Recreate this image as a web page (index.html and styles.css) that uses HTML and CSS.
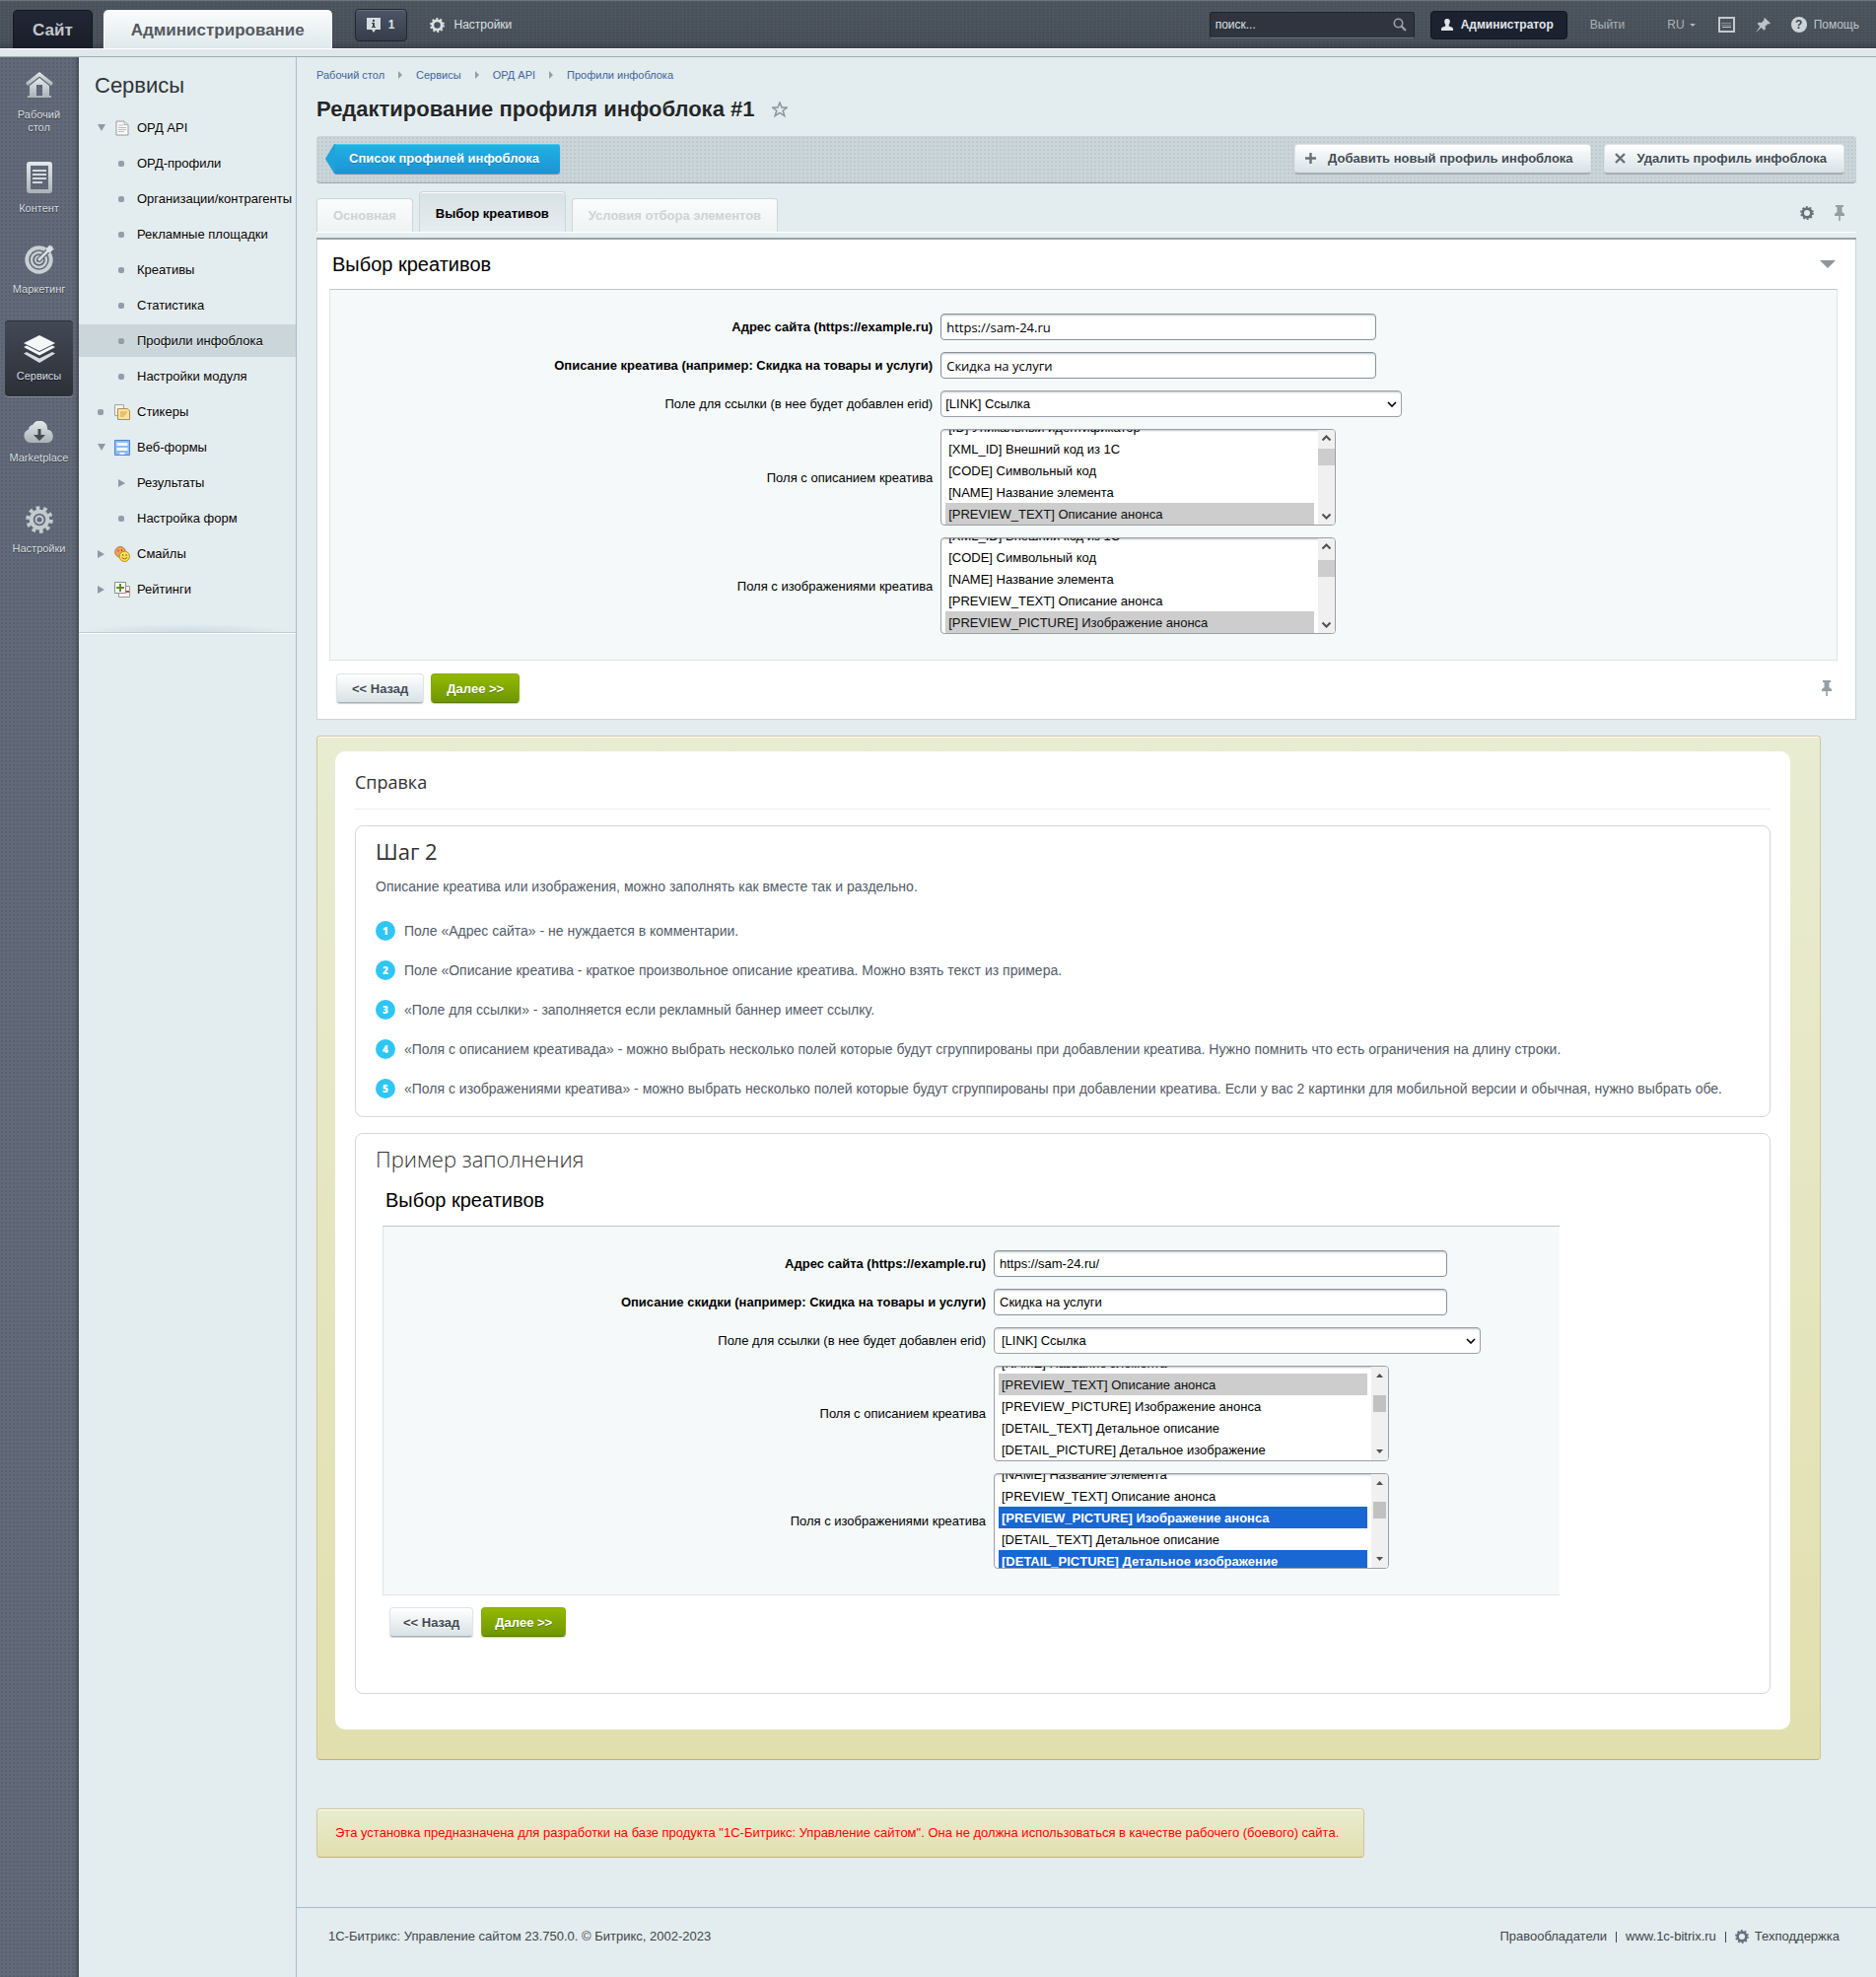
FILE: index.html
```html
<!DOCTYPE html>
<html lang="ru">
<head>
    <meta charset="UTF-8">
    <meta name="viewport" content="width=device-width, initial-scale=1.0">
    <title>Редактирование профиля инфоблока #1</title>
    <link rel="stylesheet" href="styles.css">
</head>

<body>
    <!-- shared icons -->
    <svg class="sprite" aria-hidden="true">
        <defs>
            <linearGradient id="metal" x1="0" y1="0" x2="0" y2="1">
                <stop offset="0" stop-color="#e4eaec"/>
                <stop offset="1" stop-color="#a9b2b6"/>
            </linearGradient>
            <symbol id="i-gear" viewBox="0 0 16 16">
                <circle cx="8" cy="8" r="5" fill="none" stroke="currentColor" stroke-width="3"/>
                <circle cx="8" cy="8" r="6.9" fill="none" stroke="currentColor" stroke-width="2" stroke-dasharray="2.17 2.17"/>
            </symbol>
            <symbol id="i-pin-up" viewBox="0 0 12 16">
                <path d="M2 0h8v2H8.500v5L11 9v2H6.800v5H5.200v-5H1V9l2.500-2V2H2z" fill="currentColor"/>
            </symbol>
        </defs>
    </svg>

    <header class="topbar">
        <nav class="top-tabs">
            <a href="#" class="top-tab">Сайт</a>
            <a href="#" class="top-tab active">Администрирование</a>
        </nav>
        <button type="button" class="notice-btn">
            <svg width="14" height="16" viewBox="0 0 14 16"><path d="M0 1h14v12H9l-2 3-2-3H0z" fill="#d5dcde"/><path d="M6 3h2v2H6zM5 6h3v4h1v1H5v-1h1V7H5z" fill="#3c4352"/></svg>
            <span>1</span>
        </button>
        <a href="#" class="top-link top-settings"><svg width="15" height="15"><use href="#i-gear"/></svg>Настройки</a>
        <form class="search">
            <input type="text" placeholder="поиск..." aria-label="поиск">
            <button type="submit" aria-label="Найти"><svg width="14" height="14" viewBox="0 0 14 14"><circle cx="5.500" cy="5.500" r="4.200" fill="none" stroke="#9da3aa" stroke-width="1.600"/><path d="M8.500 8.500L13 13" stroke="#9da3aa" stroke-width="2.200"/></svg></button>
        </form>
        <a href="#" class="user-btn"><svg width="12" height="12" viewBox="0 0 12 12"><path d="M6 0c2.300 0 3 1.600 2.800 3.200C8.600 4.800 7.600 5.500 7.600 7c0 1 4.400 1.200 4.400 3.200V12H0v-1.800C0 8.200 4.400 8 4.400 7c0-1.500-1-2.200-1.200-3.800C3 1.600 3.700 0 6 0z" fill="#dfe5e8"/></svg>Администратор</a>
        <a href="#" class="top-link muted">Выйти</a>
        <a href="#" class="top-link muted lang">RU<i></i></a>
        <div class="top-tools">
            <a href="#" aria-label="Горячие клавиши"><svg width="17" height="16" viewBox="0 0 17 16"><path d="M1 1h15v14H1z" fill="none" stroke="#c3cacd" stroke-width="2"/><path d="M3.500 6.500h10M3.500 8.500h10" stroke="#c3cacd" stroke-dasharray="1 1"/><path d="M4 10.500h9" stroke="#c3cacd"/></svg></a>
            <a href="#" aria-label="Закрепить"><svg width="15" height="15" viewBox="0 0 15 15"><path d="M9 0l6 5.500-1.500 1-1.200-.3-2.700 2.600.3 2.800-1.400 1.200-2.900-2.700L0 15l4.200-6.200L1.600 6l1.200-1.300 3 .3L8.600 2.300 8.200 1z" fill="#bcc3c7"/></svg></a>
            <a href="#" class="top-link help"><b>?</b>Помощь</a>
        </div>
    </header>
    <div class="topline"></div>

    <div class="layout">
        <nav class="rail">
            <a href="#" class="rail-item">
                <svg width="30" height="28" viewBox="0 0 30 28"><g fill="url(#metal)"><path d="M15 0l14 11-2 3L15 4.500 3 14l-2-3z"/><path d="M5 14l10-8 10 8v10h2v2H3v-2h2zm7-1v11h6V13z" fill-rule="evenodd"/></g></svg>
                <span>Рабочий стол</span>
            </a>
            <a href="#" class="rail-item">
                <svg width="26" height="32" viewBox="0 0 26 32"><path fill-rule="evenodd" d="M3 0h20a3 3 0 0 1 3 3v26a3 3 0 0 1-3 3H3a3 3 0 0 1-3-3V3a3 3 0 0 1 3-3zm1 4v24h18V4z" fill="url(#metal)"/><path d="M6 8h14v2H6zm0 4h14v2H6zm0 4h14v2H6zm0 4h10v2H6z" fill="#d2d9dc"/></svg>
                <span>Контент</span>
            </a>
            <a href="#" class="rail-item marketing">
                <svg width="30" height="30" viewBox="0 0 30 30"><g fill="none" stroke="#c8d0d3"><circle cx="14.500" cy="15.500" r="12.200" stroke-width="4"/><circle cx="14.500" cy="15.500" r="7.500" stroke-width="2.500"/><circle cx="14.500" cy="15.500" r="3.500" stroke-width="2"/></g><path d="M14 16L27 3" stroke="#5f6674" stroke-width="5"/><path d="M14 16L28 2" stroke="#d9e0e2" stroke-width="2.600"/><path d="M22 8V4l4-4v4h4l-4 4z" fill="#dce3e5"/></svg>
                <span>Маркетинг</span>
            </a>
            <a href="#" class="rail-item active">
                <svg width="32" height="28" viewBox="0 0 32 28"><g fill="#f4f7f8"><path d="M16 0l16 8-16 8L0 8z"/><path d="M0 12l3-1.500 13 6.500 13-6.500 3 1.500-16 8.500z"/><path d="M0 18.500L3 17l13 6.500L29 17l3 1.500L16 28z" fill="#d4dbde"/></g></svg>
                <span>Сервисы</span>
            </a>
            <a href="#" class="rail-item market">
                <svg width="32" height="22" viewBox="0 0 32 22"><path d="M7 22a7 7 0 0 1-2-13.500A5 5 0 0 1 9 4 8 8 0 0 1 24 6.500v2A7 7 0 0 1 25 22z" fill="url(#metal)"/><path d="M14.500 8h3v6H22l-6 6-6-6h4.500z" fill="#454c59"/></svg>
                <span>Marketplace</span>
            </a>
            <a href="#" class="rail-item settings">
                <svg width="28" height="28" viewBox="0 0 28 28"><g fill="none" stroke="#c3cbce"><circle cx="14" cy="14" r="8.300" stroke-width="4.200"/><circle cx="14" cy="14" r="11.800" stroke-width="4" stroke-dasharray="3.707 3.707"/><circle cx="14" cy="14" r="3.500" stroke-width="2"/></g></svg>
                <span>Настройки</span>
            </a>
        </nav>

        <aside class="sidebar">
            <h2>Сервисы</h2>
            <ul class="menu">
                <li><a href="#"><i class="mark down"></i><svg class="ico" width="16" height="16" viewBox="0 0 16 16"><path d="M2 1h8l4 3.500V15H2z" fill="#fafafa" stroke="#9a9a9a"/><path d="M4 5h5M4 7.500h8M4 9.500h8M4 11.500h6" stroke="#bbb"/><path d="M10 1v3.500h4" fill="#ddd" stroke="#b5b5b5"/></svg>ОРД API</a></li>
                <li class="sub"><a href="#"><i class="mark dot"></i>ОРД-профили</a></li>
                <li class="sub"><a href="#"><i class="mark dot"></i>Организации/контрагенты</a></li>
                <li class="sub"><a href="#"><i class="mark dot"></i>Рекламные площадки</a></li>
                <li class="sub"><a href="#"><i class="mark dot"></i>Креативы</a></li>
                <li class="sub"><a href="#"><i class="mark dot"></i>Статистика</a></li>
                <li class="sub active"><a href="#"><i class="mark dot"></i>Профили инфоблока</a></li>
                <li class="sub"><a href="#"><i class="mark dot"></i>Настройки модуля</a></li>
                <li><a href="#"><i class="mark dot"></i><svg class="ico" width="16" height="16" viewBox="0 0 16 16"><path d="M.5.500h9v11h-9z" fill="#f1f1ee" stroke="#a5a5a0"/><path d="M3.500 4.500H13l2.500 2v9h-12z" fill="#fbe29a" stroke="#b78d4e"/><path d="M6 8h7M6 10h6M6 12h4" stroke="#cf9d50"/></svg>Стикеры</a></li>
                <li><a href="#"><i class="mark down"></i><svg class="ico" width="16" height="16" viewBox="0 0 16 16"><path d="M.5.500h15v15H.5z" fill="#8dbdf0" stroke="#4f86c6"/><path d="M2.500 3h11v3h-11zm0 5h11v3h-11zm3 5h5v2h-5z" fill="#eef6ff"/></svg>Веб-формы</a></li>
                <li class="sub"><a href="#"><i class="mark right"></i>Результаты</a></li>
                <li class="sub"><a href="#"><i class="mark dot"></i>Настройка форм</a></li>
                <li><a href="#"><i class="mark right"></i><svg class="ico" width="16" height="16" viewBox="0 0 16 16"><circle cx="6" cy="5.800" r="5.300" fill="#f0a45c" stroke="#b8722f"/><path d="M4 3.500v2M7.500 3v2" stroke="#8b5020"/><circle cx="10.300" cy="10.300" r="5.200" fill="#fbdf58" stroke="#b98a22"/><path d="M8.700 8v2M12 8v2M7.500 11.500q2.800 3 5.600 0" stroke="#8a6415" fill="none"/></svg>Смайлы</a></li>
                <li><a href="#"><i class="mark right"></i><svg class="ico" width="16" height="16" viewBox="0 0 16 16"><path d="M4.500 4.500h11v11h-11z" fill="#fafafa" stroke="#9b9b9b"/><path d="M12 9h3v2h-3z" fill="#d8402a"/><path d="M.5.500h11v11H.5z" fill="#fff" stroke="#8c8c8c"/><path d="M6 2v8M2 6h8" stroke="#5d8f2a" stroke-width="2"/></svg>Рейтинги</a></li>
            </ul>
        </aside>

        <div class="page">
            <main class="content">
                <nav class="crumbs">
                    <a href="#">Рабочий стол</a><i></i><a href="#">Сервисы</a><i></i><a href="#">ОРД API</a><i></i><a href="#">Профили инфоблока</a>
                </nav>
                <h1>Редактирование профиля инфоблока #1
                    <svg width="16" height="16" viewBox="0 0 16 16"><path d="M8 1l2 5h5.300l-4.100 3.200 1.600 5.300L8 11.300l-4.800 3.200 1.600-5.300L.7 6H6z" fill="none" stroke="#8b959c" stroke-width="1.500"/></svg>
                </h1>

                <div class="toolbar">
                    <a href="#" class="back-btn"><svg width="10" height="30" viewBox="0 0 10 30"><path d="M10 0H9L0 15l9 15h1z" fill="#1ea3dc"/></svg><span>Список профилей инфоблока</span></a>
                    <div class="toolbar-right">
                        <a href="#" class="btn tool-btn"><svg width="11" height="11" viewBox="0 0 11 11"><path d="M5.500 0v11M0 5.500h11" stroke="#66717a" stroke-width="2.400"/></svg>Добавить новый профиль инфоблока</a>
                        <a href="#" class="btn tool-btn"><svg width="11" height="11" viewBox="0 0 11 11"><path d="M1 1l9 9M10 1l-9 9" stroke="#66717a" stroke-width="2.400"/></svg>Удалить профиль инфоблока</a>
                    </div>
                </div>

                <div class="tabs">
                    <a href="#" class="tab disabled">Основная</a>
                    <a href="#" class="tab active">Выбор креативов</a>
                    <a href="#" class="tab disabled">Условия отбора элементов</a>
                    <div class="tab-tools">
                        <svg width="14" height="14" color="#666f74"><use href="#i-gear"/></svg>
                        <svg width="12" height="16" color="#959ea3"><use href="#i-pin-up"/></svg>
                    </div>
                </div>

                <form class="panel">
                    <div class="panel-head">
                        <h3>Выбор креативов</h3>
                        <i class="collapse"></i>
                    </div>
                    <div class="fields">
                        <label for="site" class="req">Адрес сайта (https://example.ru)</label>
                        <div><input type="text" id="site" class="text" value="https://sam-24.ru"></div>
                        <label for="descr" class="req">Описание креатива (например: Скидка на товары и услуги)</label>
                        <div><input type="text" id="descr" class="text" value="Скидка на услуги"></div>
                        <label for="link">Поле для ссылки (в нее будет добавлен erid)</label>
                        <div><select id="link" class="drop"><option>[LINK] Ссылка</option></select></div>
                        <label for="text-fields">Поля с описанием креатива</label>
                        <div><span class="list-wrap"><select multiple id="text-fields" class="list" data-selected="PREVIEW_TEXT" data-scroll="14"></select></span></div>
                        <label for="pic-fields">Поля с изображениями креатива</label>
                        <div><span class="list-wrap"><select multiple id="pic-fields" class="list" data-selected="PREVIEW_PICTURE" data-scroll="36"></select></span></div>
                    </div>
                    <div class="panel-foot">
                        <button type="button" class="btn">&lt;&lt; Назад</button>
                        <button type="button" class="btn green">Далее &gt;&gt;</button>
                        <svg width="12" height="16" color="#959ea3"><use href="#i-pin-up"/></svg>
                    </div>
                </form>

                <section class="note help-note">
                    <div class="help-body">
                        <h4>Справка</h4>
                        <div class="help-box">
                            <h5>Шаг 2</h5>
                            <p>Описание креатива или изображения, можно заполнять как вместе так и раздельно.</p>
                            <ol class="steps">
                                <li>Поле «Адрес сайта» - не нуждается в комментарии.</li>
                                <li>Поле «Описание креатива - краткое произвольное описание креатива. Можно взять текст из примера.</li>
                                <li>«Поле для ссылки» - заполняется если рекламный баннер имеет ссылку.</li>
                                <li>«Поля с описанием креативада» - можно выбрать несколько полей которые будут сгруппированы при добавлении креатива. Нужно помнить что есть ограничения на длину строки.</li>
                                <li>«Поля с изображениями креатива» - можно выбрать несколько полей которые будут сгруппированы при добавлении креатива. Если у вас 2 картинки для мобильной версии и обычная, нужно выбрать обе.</li>
                            </ol>
                        </div>
                        <div class="help-box sample-box">
                            <h5 class="light">Пример заполнения</h5>
                            <form class="sample">
                                <h3>Выбор креативов</h3>
                                <div class="fields">
                                    <label for="s-site" class="req">Адрес сайта (https://example.ru)</label>
                                    <div><input type="text" id="s-site" class="text" value="https://sam-24.ru/"></div>
                                    <label for="s-descr" class="req">Описание скидки (например: Скидка на товары и услуги)</label>
                                    <div><input type="text" id="s-descr" class="text" value="Скидка на услуги"></div>
                                    <label for="s-link">Поле для ссылки (в нее будет добавлен erid)</label>
                                    <div><select id="s-link" class="drop"><option>[LINK] Ссылка</option></select></div>
                                    <label for="s-text">Поля с описанием креатива</label>
                                    <div><span class="list-wrap"><select multiple id="s-text" class="list" data-selected="PREVIEW_TEXT" data-scroll="81"></select></span></div>
                                    <label for="s-pic">Поля с изображениями креатива</label>
                                    <div><span class="list-wrap"><select multiple id="s-pic" class="list focused" data-selected="PREVIEW_PICTURE DETAIL_PICTURE" data-scroll="77"></select></span></div>
                                </div>
                                <div class="sample-foot">
                                    <button type="button" class="btn">&lt;&lt; Назад</button>
                                    <button type="button" class="btn green">Далее &gt;&gt;</button>
                                </div>
                            </form>
                        </div>
                    </div>
                </section>

                <div class="note warning">Эта установка предназначена для разработки на базе продукта "1С-Битрикс: Управление сайтом". Она не должна использоваться в качестве рабочего (боевого) сайта.</div>
            </main>

            <footer class="footer">
                <span>1С-Битрикс: Управление сайтом 23.750.0. © Битрикс, 2002-2023</span>
                <div class="footer-links">
                    <a href="#">Правообладатели</a><s></s><a href="#">www.1c-bitrix.ru</a><s></s><a href="#"><svg width="14" height="14" color="#66707a"><use href="#i-gear"/></svg>Техподдержка</a>
                </div>
            </footer>
        </div>
    </div>

    <script src="script.js"></script>
</body>

</html>
```
FILE: styles.css
```css
* {
    box-sizing: border-box;
}

body {
    margin: 0;
    min-height: 100vh;
    display: flex;
    flex-direction: column;
    background: #e3ecee;
    color: #000;
    font-family: "Liberation Sans", Arial, sans-serif;
    font-size: 13px;
}

a {
    color: inherit;
    text-decoration: none;
}

svg {
    display: block;
    flex: none;
}

.sprite {
    position: absolute;
    width: 0;
    height: 0;
}

/* top bar */
.topbar {
    display: flex;
    align-items: center;
    height: 49px;
    padding: 0 17px 0 13px;
    background:
        repeating-linear-gradient(90deg, rgba(255,255,255,.03) 0 1px, transparent 1px 4px),
        repeating-linear-gradient(0deg, rgba(0,0,0,.06) 0 1px, transparent 1px 3px),
        linear-gradient(#4d555f, #48505a 85%, #3b424b);
    border-top: 1px solid #6a737c;
    font-size: 12px;
    color: #d5dadd;
}

.top-tabs {
    display: flex;
    align-self: flex-end;
    gap: 11px;
}

.top-tab {
    height: 39px;
    line-height: 40px;
    padding: 0 19px;
    border: 1px solid #14171e;
    border-bottom: 0;
    border-radius: 5px 5px 0 0;
    background: linear-gradient(#222736, #191d28);
    font-size: 17px;
    font-weight: bold;
    color: #c3c6c9;
}

.top-tab.active {
    padding: 0 27px;
    border-color: #fff;
    background: linear-gradient(#fafcfc, #dfe9ec);
    color: #55595e;
}

.notice-btn {
    display: flex;
    align-items: center;
    gap: 8px;
    height: 33px;
    margin-left: 23px;
    padding: 0 12px 0 11px;
    border: 1px solid #22262e;
    border-radius: 4px;
    background: linear-gradient(#4d5566, #363c4a);
    font: bold 12px "Liberation Sans", Arial, sans-serif;
    color: #dfe3e6;
    box-shadow: inset 0 1px #656d7e;
}

.top-link {
    display: flex;
    align-items: center;
    gap: 9px;
}

.top-settings {
    margin-left: 23px;
    color: #dbe0e3;
}

.search {
    display: flex;
    align-items: center;
    width: 208px;
    height: 27px;
    margin-left: auto;
    padding: 0 7px 0 5px;
    border: 1px solid #1f242c;
    border-bottom-color: #6c747d;
    border-radius: 3px;
    background: #2f343e;
}

.search input {
    flex: 1;
    min-width: 0;
    padding: 0;
    border: 0;
    background: none;
    outline: none;
    font: 12px "Liberation Sans", Arial, sans-serif;
    color: #fff;
}

.search input::placeholder {
    color: #dfe2e5;
}

.search button {
    padding: 0;
    border: 0;
    background: none;
}

.user-btn {
    display: flex;
    align-items: center;
    gap: 8px;
    height: 29px;
    margin-left: 16px;
    padding: 0 13px 0 10px;
    border: 1px solid #12151c;
    border-radius: 4px;
    background: #1c2130;
    font-weight: bold;
    color: #e2e6ea;
}

.top-link.muted {
    margin-left: 23px;
    color: #adb3b8;
}

.top-link.lang {
    gap: 5px;
    margin-left: 43px;
}

.lang i {
    border: 3px solid transparent;
    border-top-color: #adb3b8;
    border-bottom: 0;
}

.top-tools {
    display: flex;
    align-items: center;
    gap: 21px;
    margin-left: 23px;
}

.help {
    gap: 7px;
    color: #c0c6ca;
}

.help b {
    width: 16px;
    height: 16px;
    border-radius: 50%;
    background: #cdd4d7;
    line-height: 16px;
    text-align: center;
    color: #3f4650;
}

.topline {
    height: 9px;
    background: #dfe9ec;
    border-top: 1px solid #fff;
    border-bottom: 1px solid #a2abb0;
}

/* layout */
.layout {
    display: flex;
    flex: 1;
}

.rail {
    flex: none;
    width: 80px;
    padding: 4px 6px 0 5px;
    background: radial-gradient(circle, #596070 1px, transparent 1px) 0 0 / 4px 4px, #626978;
    box-shadow: inset -5px 0 5px -4px rgba(0,0,0,.4);
}

.rail-item {
    display: flex;
    flex-direction: column;
    align-items: center;
    min-height: 77px;
    padding-top: 11px;
    font-size: 11px;
    line-height: 13px;
    text-align: center;
    color: #d9dee1;
    text-shadow: 0 1px 1px rgba(0,0,0,.5);
}

.rail-item span {
    margin-top: 9px;
}

.rail-item + .rail-item {
    margin-top: 14px;
}

.rail-item + .marketing {
    margin-top: 7px;
}

.rail-item.active {
    margin-top: 11px;
    padding-top: 15px;
    border-radius: 4px;
    background: linear-gradient(#434955, #2b3038);
    box-shadow: inset 0 1px #2c313a, 0 1px #8a919b;
}

.rail-item.active span {
    margin-top: 7px;
}

.rail-item + .settings {
    margin-top: 9px;
}

.sidebar {
    flex: none;
    width: 221px;
    border-right: 1px solid #a5bccf;
}

.sidebar h2 {
    margin: 0;
    padding: 15px 0 0 16px;
    font-size: 22px;
    font-weight: normal;
    line-height: 28px;
    color: #2f3438;
}

.menu {
    margin: 0;
    padding: 10px 0 26px;
    list-style: none;
    border-bottom: 1px solid #bccdd6;
    background: radial-gradient(ellipse at bottom, #cbdbe4, transparent 70%) bottom / 100% 8px no-repeat;
    box-shadow: 0 1px #fff;
}

.menu li {
    height: 36px;
    padding: 2px 0 1px;
}

.menu a {
    display: flex;
    align-items: center;
    height: 33px;
    padding-left: 17px;
    text-shadow: 0 1px #fff;
    white-space: nowrap;
}

.menu .sub a {
    padding-left: 38px;
}

.menu .active a {
    background: #cbd6db;
}

.mark {
    flex: none;
    width: 12px;
    margin-right: 9px;
}

.mark::before {
    content: "";
    display: block;
    width: 6px;
    height: 6px;
    margin-left: 2px;
    border-radius: 2px;
    background: #949dac;
}

.mark.down::before,
.mark.right::before {
    width: 0;
    height: 0;
    border: 4px solid transparent;
    border-top: 7px solid #8d98a8;
    border-bottom: 0;
    border-radius: 0;
    background: none;
}

.mark.right::before {
    border: 4px solid transparent;
    border-left: 7px solid #8d98a8;
    border-right: 0;
}

.ico {
    margin: 0 7px 0 -2px;
}

.page {
    display: flex;
    flex-direction: column;
    flex: 1;
    min-width: 0;
}

.content {
    flex: 1;
    padding: 11px 20px 0;
}

/* heading */
.crumbs {
    display: flex;
    align-items: center;
    line-height: 14px;
    font-size: 11px;
    color: #40669b;
}

.crumbs i {
    margin: 0 14px;
    border: 4px solid transparent;
    border-left-color: #959da2;
    border-right: 0;
}

h1 {
    display: flex;
    align-items: center;
    gap: 18px;
    margin: 14px 0;
    font-size: 22px;
    line-height: 27px;
    color: #23272b;
    text-shadow: 0 1px #fff;
}

.toolbar {
    display: flex;
    align-items: center;
    justify-content: space-between;
    height: 48px;
    padding: 0 12px 2px 9px;
    border-bottom: 1px solid #9ba7ad;
    border-radius: 4px;
    background: radial-gradient(circle, #bfcad0 1px, transparent 1px) 0 0 / 4px 4px, #cad5da;
}

.back-btn {
    display: flex;
    height: 30px;
    font-weight: bold;
    color: #fff;
}

.back-btn span {
    padding: 0 21px 0 14px;
    border-radius: 0 3px 3px 0;
    background: linear-gradient(#22b2e3, #1c93d5);
    box-shadow: inset 0 1px #43c8ee, 0 1px 1px #6d8b9a;
    line-height: 30px;
    text-shadow: 0 1px #1480b5;
}

.toolbar-right {
    display: flex;
    gap: 13px;
}

.btn {
    display: inline-block;
    height: 30px;
    padding: 0 15px;
    border: 1px solid #dfe4e6;
    border-bottom-color: #aab2b6;
    border-radius: 4px;
    background: linear-gradient(#fff, #d8e2e6);
    box-shadow: 0 1px 1px rgba(0,0,0,.2);
    font: bold 13px "Liberation Sans", Arial, sans-serif;
    line-height: 27px;
    color: #3f4b54;
    text-shadow: 0 1px #fff;
}

.btn.green {
    border-color: #85a900;
    border-bottom-color: #577c00;
    background: linear-gradient(#94b900, #6f9700);
    color: #fff;
    text-shadow: 0 1px #56760a;
}

.tool-btn {
    display: flex;
    align-items: center;
    gap: 12px;
    padding: 0 17px 0 10px;
}

/* tabs */
.tabs {
    display: flex;
    align-items: flex-end;
    gap: 6px;
    height: 57px;
    padding-bottom: 6px;
    border-bottom: 2px solid #98a3a8;
    background: linear-gradient(#fff, #fff) 0 49px / 100% 1px no-repeat, linear-gradient(#e6edf0, #e6edf0) 0 50px / 100% 6px no-repeat;
}

.tab {
    height: 34px;
    padding: 0 16px;
    border: 1px solid #ccd6d9;
    border-bottom: 0;
    border-radius: 4px 4px 0 0;
    background: linear-gradient(#fbfcfc, #eff3f4);
    font-weight: bold;
    line-height: 34px;
}

.tab.disabled {
    color: #cfd3d5;
}

.tab.active {
    height: 41px;
    background: linear-gradient(#d8e1e4, #e6edf0);
    line-height: 43px;
    box-shadow: inset 0 1px #fff;
}

.tab-tools {
    display: flex;
    align-items: center;
    gap: 20px;
    margin: 0 11px 11px auto;
}

/* form */
.panel {
    padding: 0 18px 16px 12px;
    border: 1px solid #ccd6da;
    border-top: 0;
    background: #fff;
}

.panel-head {
    display: flex;
    align-items: center;
    justify-content: space-between;
    height: 50px;
    padding: 0 2px 0 3px;
}

h3 {
    margin: 0;
    font-size: 20px;
    font-weight: normal;
}

.collapse {
    border: 8px solid transparent;
    border-top-color: #8d969b;
    border-bottom: 0;
}

.fields {
    display: grid;
    grid-template-columns: 40% 1fr;
    column-gap: 8px;
    row-gap: 12px;
    align-items: center;
    padding: 24px 0 26px;
    border: 1px solid #dce6ea;
    border-top-color: #bcc7cc;
    background: #f5f9fa;
}

.fields label {
    text-align: right;
}

.fields .req {
    font-weight: bold;
}

.fields div {
    display: flex;
}

.text,
.drop,
.list {
    border: 1px solid #9b9fa5;
    border-radius: 4px;
    background-color: #fff;
    box-shadow: inset 0 2px 2px -1px #c0c5c9;
    font: 13px "Liberation Sans", Arial, sans-serif;
    color: #000;
}

.text {
    width: 442px;
    height: 27px;
    padding: 0 5px;
    border-color: #87919c;
}

.panel .text {
    font-family: "Open Sans", sans-serif;
}

.drop {
    width: 468px;
    height: 27px;
    padding: 0 4px;
    appearance: none;
    background: url("data:image/svg+xml,%3Csvg xmlns='http://www.w3.org/2000/svg' width='10' height='6'%3E%3Cpath d='M1 1l4 4 4-4' fill='none' stroke='%23000' stroke-width='1.600'/%3E%3C/svg%3E") right 4px center no-repeat #fff;
}

/* multiple select with its own scroll bar */
.list-wrap {
    position: relative;
}

.list {
    display: block;
    width: 401px;
    height: 98px;
    padding: 0 21px 0 4px;
    overflow-y: scroll;
    outline: none;
    scrollbar-width: none;
}

.list option {
    min-height: 22px;
    padding: 4px 3px 3px;
}

.list option:checked {
    background: linear-gradient(#cdcdcd, #cdcdcd);
}

.list.focused option:checked {
    background: linear-gradient(#1967d2, #1967d2);
    font-weight: bold;
    color: #fff;
}

.bar {
    position: absolute;
    top: 1px;
    right: 1px;
    bottom: 1px;
    width: 17px;
    padding: 17px 0;
    border-radius: 0 3px 3px 0;
    background:
        url("data:image/svg+xml,%3Csvg xmlns='http://www.w3.org/2000/svg' width='17' height='17'%3E%3Cpath d='M4.500 10.500l4-4 4 4' fill='none' stroke='%23505050' stroke-width='2'/%3E%3C/svg%3E") top no-repeat,
        url("data:image/svg+xml,%3Csvg xmlns='http://www.w3.org/2000/svg' width='17' height='17'%3E%3Cpath d='M4.500 6.500l4 4 4-4' fill='none' stroke='%23505050' stroke-width='2'/%3E%3C/svg%3E") bottom no-repeat,
        #f0f0f0;
    pointer-events: none;
}

.thumb {
    display: block;
    height: 17px;
    background: #cdcdcd;
}

.panel-foot {
    display: flex;
    align-items: center;
    gap: 7px;
    padding: 13px 5px 0 7px;
}

.panel-foot svg {
    margin-left: auto;
}

/* notes */
.note {
    border: 1px solid #d0c796;
    border-bottom-color: #bfb277;
    border-radius: 4px;
    background: linear-gradient(#e8ecd1, #e2dfae);
    box-shadow: inset 0 1px #fff;
}

.help-note {
    margin: 16px 36px 0 0;
    padding: 15px 30px 30px 18px;
}

.help-body {
    padding: 16px 20px 36px;
    border-radius: 10px;
    background: #fff;
}

h4 {
    margin: 0 0 16px;
    padding-bottom: 12px;
    border-bottom: 1px solid #eaecee;
    font: 18px/30px "Open Sans", sans-serif;
    color: #333;
}

.help-box {
    padding: 10px 20px 8px;
    border: 1px solid #d5d7db;
    border-radius: 8px;
    font-size: 14px;
    color: #535c69;
}

.help-box + .help-box {
    margin-top: 16px;
}

h5 {
    margin: 0;
    font: 22px/30px "Open Sans", sans-serif;
    color: #333;
}

h5.light {
    font-weight: 300;
}

.help-box p {
    margin: 11px 0 25px;
    line-height: 20px;
}

.steps {
    margin: 0;
    padding: 0;
    list-style: none;
    counter-reset: step;
}

.steps li {
    display: flex;
    gap: 9px;
    margin-bottom: 20px;
    line-height: 20px;
    counter-increment: step;
}

.steps li::before {
    content: counter(step);
    flex: none;
    width: 20px;
    height: 20px;
    border-radius: 50%;
    background: #2fc6f6;
    font: 800 10px/20px "Open Sans", sans-serif;
    text-align: center;
    color: #fff;
}

.steps li:last-child {
    margin-bottom: 10px;
}

.sample-box {
    padding-bottom: 57px;
}

.sample {
    max-width: 1201px;
    padding-left: 7px;
    font-size: 13px;
    color: #000;
}

.sample h3 {
    padding: 14px 0 12px 3px;
    line-height: 27px;
}

.sample .fields {
    grid-template-columns: 611px 1fr;
    border-right: 0;
}

.sample .text {
    width: 460px;
}

.sample .drop {
    width: 494px;
    padding-left: 7px;
}

.sample .list {
    height: 97px;
}

.sample .bar {
    background:
        url("data:image/svg+xml,%3Csvg xmlns='http://www.w3.org/2000/svg' width='17' height='17'%3E%3Cpath d='M5 11l3.500-4L12 11z' fill='%23505050'/%3E%3C/svg%3E") top no-repeat,
        url("data:image/svg+xml,%3Csvg xmlns='http://www.w3.org/2000/svg' width='17' height='17'%3E%3Cpath d='M5 6l3.500 4L12 6z' fill='%23505050'/%3E%3C/svg%3E") bottom no-repeat,
        #f0f0f0;
}

.sample .thumb {
    margin: 0 2px;
    background: #c1c1c1;
}

.sample-foot {
    display: flex;
    gap: 8px;
    padding: 12px 0 0 7px;
}

.sample-foot .btn {
    padding: 0 13px;
}

.warning {
    width: fit-content;
    margin: 49px 0 50px;
    padding: 15px 25px 15px 18px;
    line-height: 18px;
    color: #f00;
}

/* footer */
.footer {
    display: flex;
    justify-content: space-between;
    padding: 20px 37px 32px 32px;
    border-top: 1px solid #a5bccf;
    line-height: 18px;
    color: #3f454a;
}

.footer-links {
    display: flex;
    align-items: center;
}

.footer-links a {
    display: flex;
    align-items: center;
    gap: 6px;
}

.footer-links s {
    width: 1px;
    height: 11px;
    margin: 0 9px;
    background: #3f454a;
}
```
FILE: script.js
```js
const fields = [
    ['ID', 'Уникальный идентификатор'],
    ['XML_ID', 'Внешний код из 1С'],
    ['CODE', 'Символьный код'],
    ['NAME', 'Название элемента'],
    ['PREVIEW_TEXT', 'Описание анонса'],
    ['PREVIEW_PICTURE', 'Изображение анонса'],
    ['DETAIL_TEXT', 'Детальное описание'],
    ['DETAIL_PICTURE', 'Детальное изображение'],
    ['ACTIVE', 'Активность'],
    ['ACTIVE_FROM', 'Начало активности'],
    ['ACTIVE_TO', 'Окончание активности'],
    ['SORT', 'Сортировка'],
    ['TAGS', 'Теги'],
    ['DATE_CREATE', 'Дата создания'],
    ['CREATED_BY', 'Кем создан'],
    ['TIMESTAMP_X', 'Дата изменения'],
    ['MODIFIED_BY', 'Кем изменен'],
    ['LINK', 'Ссылка']
];

document.querySelectorAll('.list').forEach(function (list) {
    const selected = list.dataset.selected.split(' ');

    fields.forEach(function (field) {
        const on = selected.includes(field[0]);
        list.add(new Option('[' + field[0] + '] ' + field[1], field[0], on, on));
    });

    const bar = document.createElement('span');
    const thumb = document.createElement('span');
    bar.className = 'bar';
    thumb.className = 'thumb';
    bar.append(thumb);
    list.after(bar);

    function moveThumb() {
        const track = list.clientHeight - 17 * 3;
        const part = list.scrollTop / (list.scrollHeight - list.clientHeight);
        thumb.style.transform = 'translateY(' + Math.round(track * part) + 'px)';
    }

    list.addEventListener('scroll', moveThumb);

    // scroll after layout, otherwise the browser jumps to the selected row
    requestAnimationFrame(function () {
        list.scrollTop = Number(list.dataset.scroll);
        moveThumb();
    });
});
```
